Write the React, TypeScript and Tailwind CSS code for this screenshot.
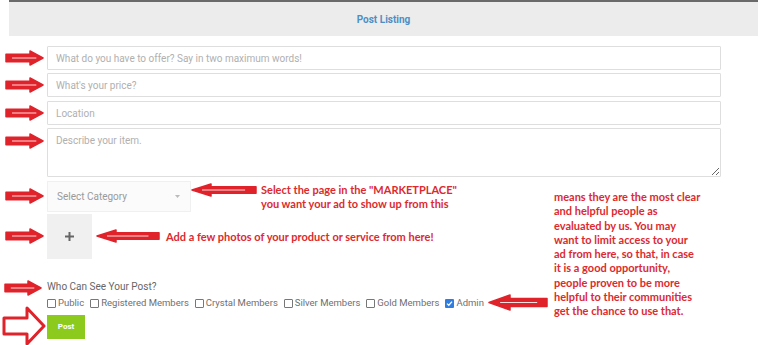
import React from 'react';

const RED = '#e0222b';

// Block arrow with the thin white highlight inside the shaft
function BlockArrow({ w, h, dir = 'right', head }: { w: number; h: number; dir?: 'right' | 'left'; head?: number }) {
  const hl = head ?? Math.round(h * 0.9);
  const t = h * 0.27;
  const b = h * 0.73;
  const pts = `1,${t} ${w - hl},${t} ${w - hl},1 ${w - 1},${h / 2} ${w - hl},${h - 1} ${w - hl},${b} 1,${b}`;
  return (
    <svg width={w} height={h} viewBox={`0 0 ${w} ${h}`} style={dir === 'left' ? { transform: 'scaleX(-1)' } : undefined}>
      <polygon points={pts} fill={RED} stroke={RED} strokeWidth={1.5} strokeLinejoin="round" />
      <line x1={w * 0.18} y1={h / 2} x2={w - hl * 0.55} y2={h / 2} stroke="#fff" strokeOpacity={0.85} strokeWidth={1} />
    </svg>
  );
}

function OutlineArrow() {
  return (
    <svg width={44} height={40} viewBox="0 0 44 40">
      <polygon
        points="2,12 25,12 25,2 42,20 25,38 25,28 2,28"
        fill="#fff"
        stroke={RED}
        strokeWidth={3}
        strokeLinejoin="round"
      />
    </svg>
  );
}

function Check({ label, checked }: { label: string; checked?: boolean }) {
  return (
    <label className="flex items-center gap-[2px]">
      {checked ? (
        <span className="w-[9px] h-[9px] rounded-[1px] bg-[#2f7de1] flex items-center justify-center">
          <svg width="7" height="7" viewBox="0 0 7 7">
            <path d="M1 3.6 L2.8 5.3 L6 1.6" stroke="#fff" strokeWidth="1.3" fill="none" />
          </svg>
        </span>
      ) : (
        <span className="w-[9px] h-[9px] rounded-[1px] border border-[#777] bg-white" />
      )}
      <span>{label}</span>
    </label>
  );
}

const note = "font-['Lato',sans-serif] font-bold text-[11px] text-[#dc2a2f] leading-[14.3px]";

export default function App() {
  const inputCls =
    'w-[674px] h-[24px] border border-[#dedede] rounded-[1px] px-[8px] text-[10px] text-[#555] placeholder:text-[#b0b0b0] outline-none bg-white';

  return (
    <div className="relative w-[768px] h-[345px] overflow-hidden bg-white font-['Roboto',sans-serif]">
      {/* Header */}
      <div className="ml-[9px] w-[749px] h-[36px] border-t-2 border-[#6a6a6a] bg-[#ececec] flex items-center justify-center">
        <span className="text-[10px] font-bold text-[#4d8fc4]">Post Listing</span>
      </div>

      {/* Form */}
      <div className="pl-[47px] pt-[10px] flex flex-col">
        <input className={inputCls} placeholder="What do you have to offer? Say in two maximum words!" />
        <input className={`${inputCls} mt-[3px]`} placeholder="What's your price?" />
        <input className={`${inputCls} mt-[4px]`} placeholder="Location" />
        <textarea
          className="mt-[3px] w-[674px] h-[49px] border border-[#dedede] rounded-[1px] px-[8px] py-[4px] text-[10px] text-[#555] placeholder:text-[#b0b0b0] outline-none resize-y"
          placeholder="Describe your item."
        />

        {/* Category */}
        <div className="mt-[4px] w-[144px] h-[31px] border border-[#f0f0f0] bg-[#fbfbfb] flex items-center justify-between pl-[9px] pr-[10px] text-[10px] text-[#9a9a9a]">
          <span>Select Category</span>
          <svg width="5" height="3" viewBox="0 0 5 3">
            <path d="M0 0 L5 0 L2.5 3 Z" fill="#bbb" />
          </svg>
        </div>

        {/* Photos */}
        <div className="mt-[2px] w-[45px] h-[45px] bg-[#f0f0f0] flex items-center justify-center">
          <svg width="9" height="9" viewBox="0 0 9 9">
            <path d="M4.5 0 V9 M0 4.5 H9" stroke="#666" strokeWidth="2" />
          </svg>
        </div>

        {/* Visibility */}
        <div className="mt-[22px] text-[10px] text-[#666] leading-[12px]">Who Can See Your Post?</div>
        <div className="mt-[4px] flex items-center gap-[6px] text-[9.5px] text-[#6f6f6f] leading-[12px]">
          <Check label="Public" />
          <Check label="Registered Members" />
          <Check label="Crystal Members" />
          <Check label="Silver Members" />
          <Check label="Gold Members" />
          <Check label="Admin" checked />
        </div>
        <button className="mt-[6px] w-[38px] h-[24px] bg-[#8ccb1e] text-white text-[8px] font-bold">Post</button>
      </div>

      {/* Annotation arrows */}
      <div className="absolute left-[5px] top-[50px]"><BlockArrow w={39} h={16} head={14} /></div>
      <div className="absolute left-[5px] top-[77px]"><BlockArrow w={39} h={16} head={14} /></div>
      <div className="absolute left-[5px] top-[105px]"><BlockArrow w={39} h={16} head={14} /></div>
      <div className="absolute left-[5px] top-[133px]"><BlockArrow w={39} h={16} head={14} /></div>
      <div className="absolute left-[5px] top-[188px]"><BlockArrow w={39} h={16} head={14} /></div>
      <div className="absolute left-[5px] top-[228px]"><BlockArrow w={39} h={16} head={14} /></div>
      <div className="absolute left-[4px] top-[280px]"><BlockArrow w={38} h={16} head={14} /></div>
      <div className="absolute left-[2px] top-[306px]"><OutlineArrow /></div>

      <div className="absolute left-[191px] top-[183px]"><BlockArrow w={66} h={14} dir="left" head={20} /></div>
      <div className="absolute left-[96px] top-[229px]"><BlockArrow w={64} h={14} dir="left" head={20} /></div>
      <div className="absolute left-[488px] top-[294px]"><BlockArrow w={60} h={17} dir="left" head={22} /></div>

      {/* Annotation notes */}
      <div className={`absolute left-[261px] top-[183px] ${note}`}>
        Select the page in the "MARKETPLACE"
        <br />
        you want your ad to show up from this
      </div>
      <div className={`absolute left-[166px] top-[230px] ${note}`}>
        Add a few photos of your product or service from here!
      </div>
      <div className={`absolute left-[554px] top-[190px] ${note}`}>
        means they are the most clear
        <br />
        and helpful people as
        <br />
        evaluated by us. You may
        <br />
        want to limit access to your
        <br />
        ad from here, so that, in case
        <br />
        it is a good opportunity,
        <br />
        people proven to be more
        <br />
        helpful to their communities
        <br />
        get the chance to use that.
      </div>
    </div>
  );
}
